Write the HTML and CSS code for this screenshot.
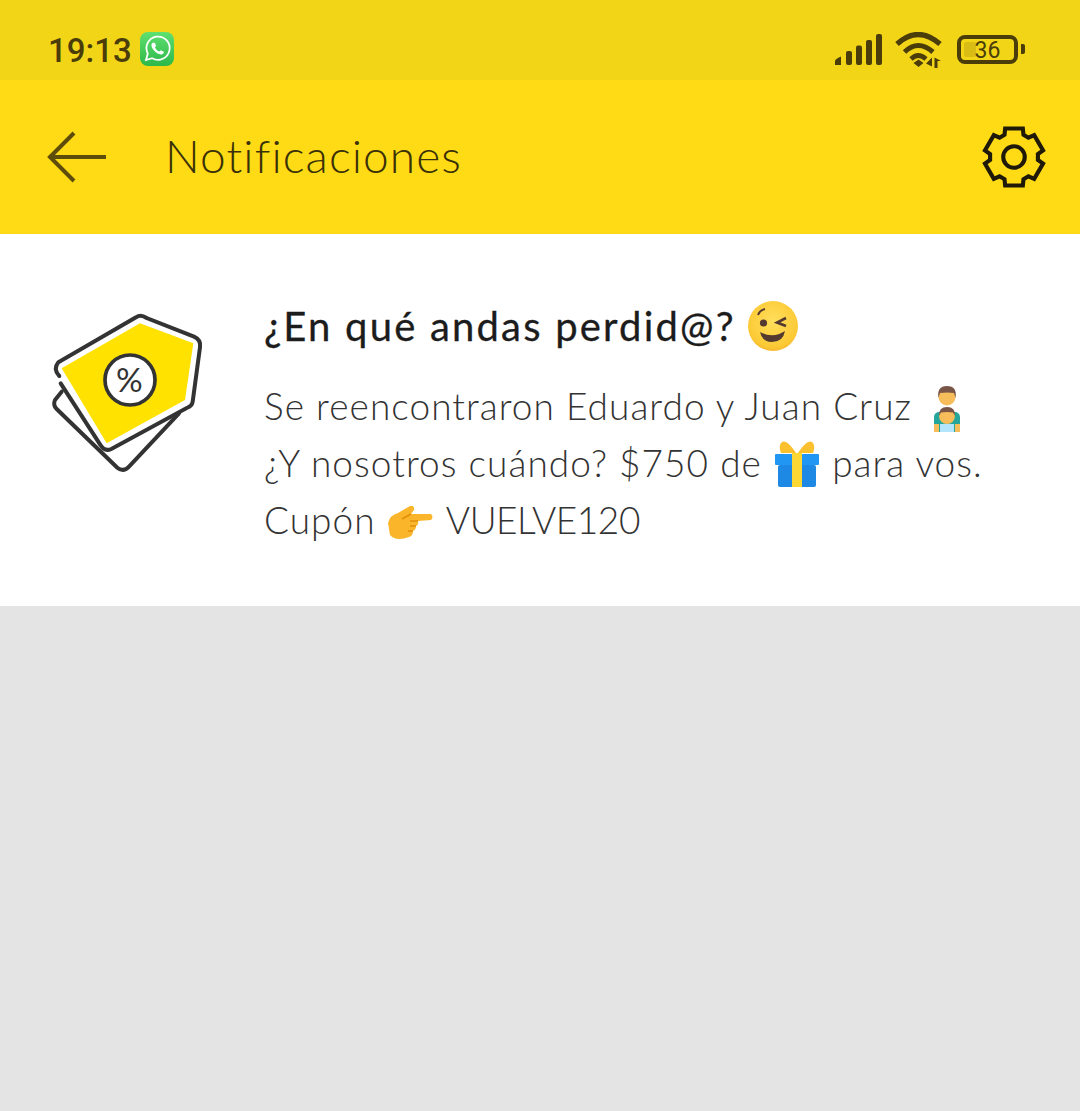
FILE: index.html
```html
<!DOCTYPE html>
<html>
<head>
  <title>Notificaciones</title>
  <link rel="stylesheet" href="styles.css">
</head>
<body>
  <div class="status-bar">
    <div class="status-left">
      <span class="clock">19:13</span>
      <svg class="wa-icon" viewBox="0 0 34 34">
        <defs>
          <linearGradient id="waGreen" x1="0" y1="0" x2="0" y2="1">
            <stop offset="0" stop-color="#5fe06f"/>
            <stop offset="1" stop-color="#2cb84a"/>
          </linearGradient>
        </defs>
        <rect width="34" height="34" rx="8" fill="url(#waGreen)"/>
        <path d="M6 28 L7.8 21.6 A11.6 11.6 0 1 1 12.2 26.2 Z" fill="none" stroke="#fff" stroke-width="1.800"/>
        <path d="M12.6 10.8 C11 12 11 14.6 13.4 17.8 C16 21.2 19.4 22.8 21.6 22.4 C23.2 22 24.2 20.6 23.8 19.8 L20.8 18.2 L19.4 19.6 C17.6 19 15.6 17 14.9 15.2 L16.2 13.8 L14.8 10.8 Z" fill="#fff"/>
      </svg>
    </div>
    <div class="status-right">
      <svg class="signal" viewBox="0 0 48 32">
        <path d="M0 31 V27 Q0 25 6 22.500 V31 Z" fill="#4a3d0a"/>
        <rect x="11" y="17" width="6" height="14" rx="2" fill="#4a3d0a"/>
        <rect x="21" y="11.500" width="6" height="19.500" rx="2" fill="#4a3d0a"/>
        <rect x="31" y="6" width="6" height="25" rx="2" fill="#4a3d0a"/>
        <rect x="41" y="0" width="6" height="31" rx="2" fill="#4a3d0a"/>
      </svg>
      <svg class="wifi" viewBox="0 0 48 36">
        <path d="M2 12 Q23 -7 45 12" fill="none" stroke="#4a3d0a" stroke-width="5.200"/>
        <path d="M9.500 20 Q23 7 38 20" fill="none" stroke="#4a3d0a" stroke-width="5"/>
        <path d="M16 27 Q23 20 31 27" fill="none" stroke="#4a3d0a" stroke-width="4.600"/>
        <path d="M18.500 31 L23.500 27.500 L28.500 31 L23.500 35 Z" fill="#4a3d0a"/>
        <path d="M37 25.500 V34.500 L31 31.500 Z M39.500 25.500 L46 29 L39.500 29 Z M39.500 29 H42.500 V36 H39.500 Z" fill="#4a3d0a"/>
      </svg>
      <div class="battery">
        <div class="battery-body">
          <div class="battery-level"></div>
          <span class="battery-text">36</span>
        </div>
        <div class="battery-nub"></div>
      </div>
    </div>
  </div>

  <div class="top-bar">
    <svg class="back-icon" viewBox="0 0 60 52">
      <path d="M59 26 H3 M27 2 L3 26 L27 50" fill="none" stroke="#5e4d0a" stroke-width="4"/>
    </svg>
    <h1 class="page-title">Notificaciones</h1>
    <svg class="gear-icon" viewBox="-100 -100 200 200">
      <g transform="scale(.93)">
        <polygon points="-30,-70 -28,-90 28,-90 30,-70 45.600,-61 63.900,-69.200 91.900,-20.800 75.600,-9 75.600,9 91.900,20.800 63.900,69.200 45.600,61 30,70 28,90 -28,90 -30,70 -45.600,61 -63.900,69.200 -91.900,20.800 -75.600,9 -75.600,-9 -91.900,-20.800 -63.900,-69.200 -45.600,-61" fill="none" stroke="#1f1a08" stroke-width="13"/>
        <circle r="34" fill="none" stroke="#1f1a08" stroke-width="13"/>
      </g>
    </svg>
  </div>

  <div class="notification">
    <svg class="coupon" viewBox="0 0 600 600">
      <path d="M95 305 L75 330 Q68 345 80 357 L262 533 Q280 548 297 530 L447 370" fill="#fff" stroke="#333" stroke-width="12" stroke-linecap="round"/>
      <path d="M88 258 Q68 238 85 217 L318 82 Q332 72 350 84 L492 140 Q514 150 510 172 L488 335 Q486 348 470 354 L244 477 Q224 486 212 466 L92 280" fill="#fff" stroke="#333" stroke-width="12" stroke-linecap="round"/>
      <path d="M95 235 L330 100 L490 160 L465 330 L230 460 Z" fill="#ffe200"/>
      <circle cx="300" cy="270" r="75" fill="#fff" stroke="#333" stroke-width="11"/>
      <text class="coupon-percent" x="298" y="306" text-anchor="middle">%</text>
    </svg>
    <div class="notification-text">
      <h2 class="notification-title">¿En qué andas perdid@?
        <svg class="emoji emoji-wink" viewBox="0 0 50 50">
          <defs>
            <radialGradient id="faceYellow" cx=".5" cy=".4" r=".65">
              <stop offset="0" stop-color="#ffdf5c"/>
              <stop offset=".8" stop-color="#fcc935"/>
              <stop offset="1" stop-color="#f4ad2a"/>
            </radialGradient>
          </defs>
          <circle cx="25" cy="25" r="25" fill="url(#faceYellow)"/>
          <circle cx="15.500" cy="22" r="3.600" fill="#543930"/>
          <path d="M10 14 Q12 9 17 8" fill="none" stroke="#543930" stroke-width="2"/>
          <path d="M38 17 L29 21.500 L38 25" fill="none" stroke="#543930" stroke-width="2.600"/>
          <path d="M12 31 Q25 38 37 30 Q35 41 24 41 Q14 41 12 31 Z" fill="#543930"/>
        </svg>
      </h2>
      <p class="notification-body">Se reencontraron Eduardo y Juan Cruz
        <svg class="emoji emoji-man" viewBox="0 0 28 46">
          <rect x="1" y="26" width="26" height="20" rx="5" fill="#26a69a"/>
          <circle cx="14" cy="11" r="8.500" fill="#f6bd5a"/>
          <path d="M5.500 12 Q3.500 0 14 0 Q24.500 0 22.500 12 L21 7 Q14 6 7 7 Z" fill="#795548"/>
          <circle cx="14" cy="30" r="8" fill="#f6bd5a"/>
          <path d="M6 30 Q5.500 21 14 21 Q22.500 21 22 30 L20 26.500 Q14 25.500 8 26.500 Z" fill="#795548"/>
          <rect x="7" y="38" width="14" height="8" fill="#b3e5fc"/>
          <rect x="1" y="38" width="5" height="8" fill="#f6bd5a"/>
          <rect x="22" y="38" width="5" height="8" fill="#f6bd5a"/>
        </svg>
        <br>¿Y nosotros cuándo? $750 de
        <svg class="emoji emoji-gift" viewBox="0 0 44 46">
          <path d="M21 12 Q12 -2 7 1 Q3 4 6 12 Z M23 12 Q32 -2 37 1 Q41 4 38 12 Z" fill="#fbc02d"/>
          <rect x="0" y="13" width="44" height="11" rx="1" fill="#2196f3"/>
          <rect x="3" y="24" width="38" height="22" rx="2" fill="#1e88e5"/>
          <rect x="17" y="12" width="10" height="34" fill="#fdd835"/>
        </svg>
        para vos.<br>Cupón
        <svg class="emoji emoji-hand" viewBox="0 0 46 34">
          <path d="M0 17 Q2 9 10 7 L22 0 Q27 -1 26 4 L23 8 L43 8 Q46 11 43 14 L30 15 Q31 19 28 20 Q28 24 25 25 Q25 30 21 31 Q8 36 2 29 Z" fill="#fbb52b"/>
          <path d="M23 8 L14 13 M30 15 L22 15 M28 20 L22 20 M25 25 L20 25" fill="none" stroke="#e08e0b" stroke-width="1.500"/>
        </svg>
        <span class="coupon-code">VUELVE120</span></p>
    </div>
  </div>

  <div class="empty-area"></div>
</body>
</html>
```

FILE: styles.css
```css
html, body { margin: 0; padding: 0; height: 100%; }
body { display: flex; flex-direction: column; background: #e4e4e4; font-family: "Lato", "Liberation Sans", sans-serif; color: #333; }

.status-bar { height: 80px; box-sizing: border-box; background: #f3d517; display: flex; align-items: center; justify-content: space-between; padding: 20px 55px 0 48px; flex: none; }
.status-left { display: flex; align-items: center; gap: 8px; }
.clock { font-family: "Roboto", sans-serif; font-weight: 500; font-size: 33px; color: #4a3d0a; }
.wa-icon { width: 34px; height: 34px; display: block; margin-top: -3px; }
.status-right { display: flex; align-items: center; }
.signal { width: 48px; height: 32px; display: block; }
.wifi { width: 48px; height: 36px; display: block; margin-left: 12px; }
.battery { display: flex; align-items: center; gap: 3px; margin: -2px 0 0 14px; }
.battery-body { position: relative; width: 61px; height: 29px; box-sizing: border-box; border: 4px solid #4a3d0a; border-radius: 8px; display: flex; align-items: center; justify-content: center; }
.battery-level { position: absolute; left: 3px; top: 3px; bottom: 3px; width: 12px; background: #d9bc14; border-radius: 2px; }
.battery-text { position: relative; top: 1px; font-family: "Roboto", sans-serif; font-size: 23px; line-height: 21px; color: #4a3d0a; }
.battery-nub { width: 4px; height: 10px; background: #4a3d0a; border-radius: 0 2px 2px 0; }

.top-bar { height: 154px; background: #ffdb15; display: flex; align-items: center; padding: 0 32px 0 47px; flex: none; }
.back-icon { width: 60px; height: 52px; display: block; }
.page-title { margin: -4px 0 0 58px; font-weight: 300; font-size: 46px; letter-spacing: 1.1px; color: #3a3008; flex: 1; }
.gear-icon { width: 68px; height: 68px; display: block; }

.notification { background: #fff; height: 372px; box-sizing: border-box; display: flex; padding: 62px 40px 0 30px; flex: none; }
.coupon { width: 200px; height: 200px; display: block; flex: none; margin-top: -6px; }
.coupon-percent { font-family: "Lato", sans-serif; font-weight: 400; font-size: 100px; fill: #333; }
.notification-text { margin-left: 34px; }
.notification-title { margin: 0 0 21px; font-weight: 400; font-size: 40px; line-height: 60px; letter-spacing: 2.2px; color: #1c1c1c; -webkit-text-stroke: .3px #1c1c1c; }
.notification-body { margin: 0; font-weight: 300; font-size: 37px; line-height: 57px; letter-spacing: 1.05px; color: #333; }
.coupon-code { letter-spacing: -.45px; }

.emoji { display: inline-block; }
.emoji-wink { width: 50px; height: 50px; vertical-align: -10px; }
.emoji-man { width: 28px; height: 46px; vertical-align: -12px; margin-left: 10px; }
.emoji-gift { width: 44px; height: 46px; vertical-align: -10px; margin: 0 2px; }
.emoji-hand { width: 46px; height: 34px; vertical-align: -6px; margin: 0 1px; }

.empty-area { flex: 1; }
```
